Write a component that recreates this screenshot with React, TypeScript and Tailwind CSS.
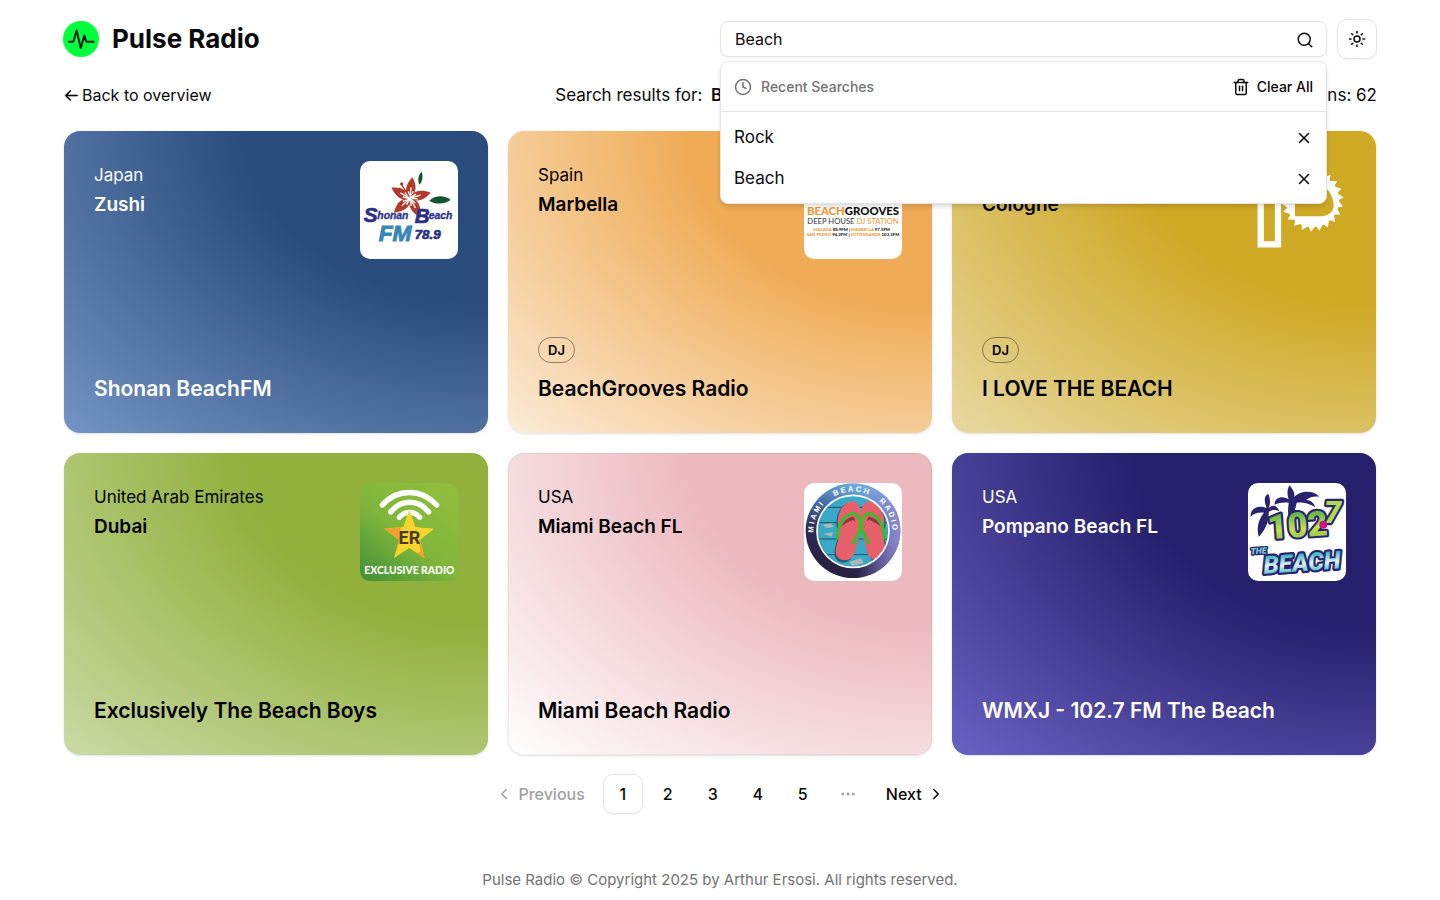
import { useState } from "react";
import type { ReactNode } from "react";
import { ChevronLeft, ChevronRight, Clock, Ellipsis, Search, Sun, Trash2, X } from "lucide-react";
import { RxArrowLeft } from "react-icons/rx";

const SANS = "'Liberation Sans', sans-serif";
const LATO = "Lato, 'Liberation Sans', sans-serif";
const ROBOTO = "Roboto, 'Liberation Sans', sans-serif";

function PulseMark() {
  return (
    <svg viewBox="0 0 36 36" className="size-9" aria-hidden="true">
      <circle cx="18" cy="18" r="18" fill="#00ff3c" />
      <path
        d="M6 20.800h3.400c.7 0 1.100-.3 1.300-1L13.600 9.400l4.200 17.600 3.500-12.600 1.600 5.400c.2.700.6 1 1.300 1h6.400"
        fill="none"
        stroke="#0a1a0a"
        strokeWidth="2"
        strokeLinecap="round"
        strokeLinejoin="round"
      />
    </svg>
  );
}

function ShonanLogo() {
  const petal = "M180 145C162 132 164 106 187 81C200 104 202 128 180 145Z";
  return (
    <svg viewBox="30 33 294 294" className="size-full bg-white">
      <g fill="#b23a2b">
        {[0, 68, 145, 222, 294].map((angle) => (
          <g key={angle} transform={`rotate(${angle} 180 145)`}>
            <path d={petal} />
            <path d="M180 146L183 112M179 144L175 124M181 144L190 124" stroke="#fff" strokeWidth="4" fill="none" />
          </g>
        ))}
      </g>
      <path d="M178 140L156 106" stroke="#b23a2b" strokeWidth="4" />
      <circle cx="155" cy="102" r="5" fill="#b23a2b" />
      <path d="M215 65C220 80 217 95 208 104C202 90 205 75 215 65Z" fill="#14532d" />
      <path d="M238 152C256 135 284 135 302 150C284 163 256 165 238 152Z" fill="#14532d" />
      <g fontFamily={SANS} fontWeight="700" fontStyle="italic" fill="#2b2f86" stroke="#2b2f86">
        <text x="41" y="217" fontSize="62" strokeWidth="2">S</text>
        <text x="82" y="208" fontSize="31" strokeWidth="1">honan</text>
        <text x="194" y="220" fontSize="62" strokeWidth="2">B</text>
        <text x="236" y="208" fontSize="31" strokeWidth="1">each</text>
        <text x="194" y="266" fontSize="40" strokeWidth="2">78.9</text>
        <text x="86" y="274" fontSize="68" fill="#3a86bb" stroke="#3a86bb" strokeWidth="3">FM</text>
      </g>
    </svg>
  );
}

function BeachGroovesLogo() {
  return (
    <svg viewBox="27 -101 294 294" className="size-full bg-white">
      <path d="M40 20H64M160 20H188M218 20H250M276 20H307" stroke="#555" strokeWidth="16" />
      <path d="M96 20H136" stroke="#ee9a3a" strokeWidth="16" />
      <g fontFamily={LATO} textAnchor="middle">
        <text x="174" y="60" fontSize="34" fontWeight="900" fill="#111">
          <tspan fill="#ee9a3a">BEACH</tspan>GROOVES
        </text>
        <text x="174" y="88" fontSize="23" fill="#333">
          DEEP HOUSE <tspan fill="#ee9a3a">DJ STATION</tspan>
        </text>
        <text x="170" y="110" fontSize="13" fontWeight="900" fill="#ee9a3a">
          MALAGA <tspan fill="#222">88.9FM |</tspan> MARBELLA <tspan fill="#222">97.5FM</tspan>
        </text>
        <text x="174" y="123" fontSize="13" fontWeight="900" fill="#ee9a3a">
          SAN PEDRO <tspan fill="#222">94.2FM |</tspan> SOTOGRANDE <tspan fill="#222">103.3FM</tspan>
        </text>
      </g>
    </svg>
  );
}

function LoveBeachLogo() {
  const teeth = Array.from({ length: 22 }, (_, i) => (i * 360) / 22);
  return (
    <svg viewBox="204 455 294 294" className="size-full">
      <path d="M242 480H294V705H242Z" fill="none" stroke="#fff" strokeWidth="19" />
      {teeth.map((angle) => (
        <path key={angle} d="M384 499L402 479L409 499Z" fill="#fff" transform={`rotate(${angle} 397 573)`} />
      ))}
      <path
        fillRule="evenodd"
        fill="#fff"
        d="M397 493a80 80 0 1 1 0 160a80 80 0 1 1 0-160ZM345 525V621H420C448 621 461 606 461 588C461 560 440 525 410 525Z"
      />
    </svg>
  );
}

function ExclusiveLogo() {
  return (
    <svg viewBox="30 25 294 294" className="size-full">
      <defs>
        <linearGradient id="er-bg" x1="0" y1="1" x2="0.8" y2="0">
          <stop offset="0" stopColor="#3f8f35" />
          <stop offset="0.5" stopColor="#7fb63b" />
          <stop offset="1" stopColor="#8fbe3d" />
        </linearGradient>
      </defs>
      <rect x="30" y="25" width="294" height="294" fill="url(#er-bg)" />
      <g fill="none" stroke="#fff" strokeWidth="16" strokeLinecap="round">
        <path d="M97 91C142 41 214 41 260 91" />
        <path d="M122 112C154 73 204 73 236 112" />
        <path d="M148 128C164 108 192 108 209 128" />
      </g>
      <path
        d="M178 105L196 157L253 162L210 195L224 250L178 220L132 250L147 195L103 162L160 157Z"
        fill="#f8d52e"
      />
      <path d="M103 162L152 158L150 200L132 250L147 195Z" fill="#f0a22b" />
      <path d="M205 192L210 195L224 250L200 235L212 232Z" fill="#f0a22b" />
      <text
        x="178"
        y="207"
        fontFamily={ROBOTO}
        fontSize="54"
        fontWeight="700"
        fill="#4c3b22"
        textAnchor="middle"
      >
        ER
      </text>
      <text x="178" y="298" fontFamily={LATO} fontSize="31" fontWeight="900" fill="#fff" textAnchor="middle">
        EXCLUSIVE RADIO
      </text>
    </svg>
  );
}

function Sandal({ x, mirrored }: { x: number; mirrored?: boolean }) {
  return (
    <g transform={mirrored ? `translate(${x} 78) scale(-1 1)` : `translate(${x} 78)`}>
      <path
        d="M20 4C-8 14 -18 52 -12 82C-5 108 -18 132 -20 150C-22 190 28 194 36 158C42 138 48 118 54 94C62 60 60 -12 20 4Z"
        fill="#1f5f70"
        transform="translate(-4 3)"
      />
      <path
        d="M20 4C-8 14 -18 52 -12 82C-5 108 -18 132 -20 150C-22 186 28 188 36 158C42 138 48 118 54 94C62 60 60 -12 20 4Z"
        fill="#e8606b"
      />
      <path d="M-6 78C8 54 26 48 34 48L48 84C42 64 38 60 32 58C18 62 6 72 -6 78Z" fill="#8f3440" />
      <path
        d="M-14 112C-14 74 6 42 32 38C52 44 58 68 52 88C48 104 38 114 34 126"
        fill="none"
        stroke="#45b72f"
        strokeWidth="10"
        strokeLinecap="round"
      />
    </g>
  );
}

function MiamiLogo() {
  return (
    <svg viewBox="27 25 294 294" className="size-full bg-white">
      <defs>
        <linearGradient id="miami-ring" x1="0.75" y1="0" x2="0.35" y2="1">
          <stop offset="0" stopColor="#7cc0ee" />
          <stop offset="0.35" stopColor="#4874ad" />
          <stop offset="0.65" stopColor="#2d2a55" />
          <stop offset="1" stopColor="#25203f" />
        </linearGradient>
        <linearGradient id="miami-side" x1="0.55" y1="0" x2="1" y2="0">
          <stop offset="0" stopColor="#8d86cf" stopOpacity="0" />
          <stop offset="1" stopColor="#8d86cf" />
        </linearGradient>
        <clipPath id="miami-disc">
          <circle cx="174" cy="170" r="106" />
        </clipPath>
        <path id="miami-arc" d="M57 184A118 118 0 1 1 291 184" />
      </defs>
      <circle cx="174" cy="168" r="142" fill="url(#miami-ring)" />
      <circle cx="174" cy="168" r="142" fill="url(#miami-side)" />
      <g clipPath="url(#miami-disc)">
        <rect x="60" y="60" width="230" height="230" fill="#38a9c6" />
        <path d="M60 98H290M60 144H290M60 193H290M60 240H290" stroke="#1c5368" strokeWidth="3" />
        <path d="M82 150l26-4 8 10-20 4zM84 178l30-6-4 14zM162 262l36-12 8 16-34 8zM232 200l30 6-10 12z" fill="#a9b9b4" />
        <Sandal x={142} />
        <Sandal x={254} mirrored />
      </g>
      <circle cx="174" cy="170" r="108" fill="none" stroke="#fff" strokeWidth="5" />
      <g fontFamily={SANS} fontSize="23" fontWeight="700" fill="#fff">
        <text>
          <textPath href="#miami-arc" startOffset="10">M I A M I</textPath>
        </text>
        <text>
          <textPath href="#miami-arc" startOffset="142">B E A C H</textPath>
        </text>
        <text>
          <textPath href="#miami-arc" startOffset="286">R A D I O</textPath>
        </text>
      </g>
    </svg>
  );
}

function WmxjLogo() {
  return (
    <svg viewBox="30 25 294 294" className="size-full bg-white">
      <defs>
        <linearGradient id="wmxj-green" x1="0" y1="0" x2="0" y2="1">
          <stop offset="0.2" stopColor="#63b545" />
          <stop offset="0.6" stopColor="#c8e04c" />
          <stop offset="1" stopColor="#6cb944" />
        </linearGradient>
        <linearGradient id="wmxj-teal" x1="0" y1="0" x2="0" y2="1">
          <stop offset="0.2" stopColor="#3bb4c4" />
          <stop offset="0.55" stopColor="#e2f6f4" />
          <stop offset="0.9" stopColor="#2aa9b8" />
        </linearGradient>
      </defs>
      <g fill="#29236f">
        <path d="M86 100C76 76 80 62 91 58C98 72 97 90 92 100C104 88 118 92 124 110C108 102 98 108 92 112C94 142 78 172 62 186C55 160 62 132 78 114C62 112 48 116 38 126C36 104 56 88 86 100Z" />
        <path d="M152 74C146 56 148 42 155 32C166 46 172 58 168 68C184 48 226 44 244 66C226 64 218 66 204 76C222 78 228 86 232 98C210 84 190 82 176 84C172 104 168 120 152 128C148 108 152 92 152 84C138 82 122 84 110 90C108 70 132 60 152 74Z" />
      </g>
      <g
        fontFamily={ROBOTO}
        fontWeight="900"
        stroke="#29236f"
        strokeWidth="13"
        strokeLinejoin="round"
        style={{ paintOrder: "stroke" }}
      >
        <text x="88" y="188" fontSize="104" fill="url(#wmxj-green)" transform="rotate(-4 170 150)">
          102
        </text>
        <text x="258" y="146" fontSize="92" fontStyle="italic" fill="#b2d84b">
          7
        </text>
        <circle cx="256" cy="150" r="12" fill="#c5178a" stroke="none" />
        <text x="76" y="290" fontSize="74" fontStyle="italic" fill="url(#wmxj-teal)" transform="rotate(-4 180 270)">
          BEACH
        </text>
        <text x="38" y="238" fontSize="26" strokeWidth="8" fontStyle="italic" fill="#7fd3dc" transform="rotate(-3 60 235)">
          THE
        </text>
      </g>
    </svg>
  );
}

type Station = {
  country: string;
  city: string;
  name: string;
  tag?: string;
  surface: string;
  logo: ReactNode;
};

const stations: Station[] = [
  {
    country: "Japan",
    city: "Zushi",
    name: "Shonan BeachFM",
    surface: "border-transparent text-white bg-[radial-gradient(ellipse_at_top_right,#294c7c_40%,#7594c6)]",
    logo: <ShonanLogo />,
  },
  {
    country: "Spain",
    city: "Marbella",
    name: "BeachGrooves Radio",
    tag: "DJ",
    surface: "border-transparent text-black bg-[radial-gradient(ellipse_at_top_right,#efab55_40%,#fbecd9)]",
    logo: <BeachGroovesLogo />,
  },
  {
    country: "Germany",
    city: "Cologne",
    name: "I LOVE THE BEACH",
    tag: "DJ",
    surface: "border-transparent text-black bg-[radial-gradient(ellipse_at_top_right,#cfa824_40%,#e7d9a2)]",
    logo: <LoveBeachLogo />,
  },
  {
    country: "United Arab Emirates",
    city: "Dubai",
    name: "Exclusively The Beach Boys",
    surface: "border-transparent text-black bg-[radial-gradient(ellipse_at_top_right,#91b03c_40%,#cbdaa6)]",
    logo: <ExclusiveLogo />,
  },
  {
    country: "USA",
    city: "Miami Beach FL",
    name: "Miami Beach Radio",
    surface: "border-black/5 text-black bg-[radial-gradient(ellipse_at_top_right,#ecb9bf_40%,#ffffff)]",
    logo: <MiamiLogo />,
  },
  {
    country: "USA",
    city: "Pompano Beach FL",
    name: "WMXJ - 102.7 FM The Beach",
    surface: "border-transparent text-white bg-[radial-gradient(ellipse_at_top_right,#251f6c_40%,#6a62c3)]",
    logo: <WmxjLogo />,
  },
];

function StationCard({ station }: { station: Station }) {
  return (
    <article
      className={`flex min-h-[302px] flex-col justify-between rounded-2xl border bg-origin-border p-[29px] shadow-sm ${station.surface}`}
    >
      <div className="flex items-start justify-between gap-4">
        <div className="text-[17px] leading-[29px]">
          <p>{station.country}</p>
          <p className="text-[19px] leading-[29px] font-semibold">{station.city}</p>
        </div>
        <div className="size-[98px] shrink-0 overflow-hidden rounded-[10px]">{station.logo}</div>
      </div>
      <div className="flex flex-col items-start gap-3">
        {station.tag && (
          <span className="rounded-full border border-black/40 px-[9px] text-[13px] leading-6 font-semibold">
            {station.tag}
          </span>
        )}
        <h2 className="text-[21px] leading-7 font-semibold">{station.name}</h2>
      </div>
    </article>
  );
}

function SearchBox() {
  const [query, setQuery] = useState("Beach");
  return (
    <form className="relative flex-1" onSubmit={(event) => event.preventDefault()}>
      <label htmlFor="station-search" className="sr-only">
        Search stations
      </label>
      <input
        id="station-search"
        value={query}
        onChange={(event) => setQuery(event.target.value)}
        className="block h-9 w-full rounded-lg border border-neutral-200 bg-white pr-10 pl-3.5 text-base shadow-xs outline-none"
      />
      <button type="submit" aria-label="Search" className="absolute top-[10px] right-[13px]">
        <Search size={18} />
      </button>
      <div className="absolute inset-x-0 top-full z-10 mt-1 rounded-lg border border-neutral-200 bg-white shadow-md">
        <div className="flex h-[50px] items-center justify-between border-b border-neutral-200 px-[13px] text-sm font-medium">
          <span className="flex items-center gap-[9px] text-neutral-500">
            <Clock size={18} />
            Recent Searches
          </span>
          <button type="button" className="flex items-center gap-[7px]">
            <Trash2 size={18} />
            Clear All
          </button>
        </div>
        <ul className="pt-[5px] pb-1 text-[17px]">
          {["Rock", "Beach"].map((term) => (
            <li key={term} className="flex h-[41px] items-center justify-between px-[13px]">
              <button type="button" onClick={() => setQuery(term)}>
                {term}
              </button>
              <button type="button" aria-label={`Remove ${term}`}>
                <X size={18} />
              </button>
            </li>
          ))}
        </ul>
      </div>
    </form>
  );
}

export default function App() {
  return (
    <div className="min-h-screen bg-white px-[63px] pt-[19px] pb-2 font-[Inter,sans-serif] text-neutral-950">
      <header className="grid grid-cols-2 items-center">
        <a href="#home" className="flex items-center gap-[13px]">
          <PulseMark />
          <span className="text-[26px] leading-10 font-bold">Pulse Radio</span>
        </a>
        <div className="flex items-center gap-2.5">
          <SearchBox />
          <button
            type="button"
            aria-label="Switch theme"
            className="flex size-10 items-center justify-center rounded-[10px] border border-neutral-200 shadow-xs"
          >
            <Sun size={18} />
          </button>
        </div>
      </header>

      <main>
        <div className="mt-[22px] mb-[22px] flex items-center justify-between text-[17px] leading-7">
          <a href="#overview" className="flex items-center gap-0.5 text-base">
            <RxArrowLeft size={17} className="stroke-current stroke-[0.5]" />
            Back to overview
          </a>
          <p>
            Search results for: <strong className="ml-1 font-semibold">Beach</strong>
          </p>
          <p>Total number of radio stations: 62</p>
        </div>

        <section className="grid grid-cols-3 gap-5 px-px" aria-label="Stations">
          {stations.map((station) => (
            <StationCard key={station.name} station={station} />
          ))}
        </section>

        <nav className="mt-[19px] flex items-center justify-center gap-[5px] text-base font-medium" aria-label="Pagination">
          <button type="button" disabled className="flex h-10 items-center gap-[5px] px-[13px] text-neutral-400">
            <ChevronLeft size={18} />
            Previous
          </button>
          <button
            type="button"
            aria-current="page"
            className="size-10 rounded-[10px] border border-neutral-200 shadow-xs"
          >
            1
          </button>
          {[2, 3, 4, 5].map((page) => (
            <button key={page} type="button" className="size-10">
              {page}
            </button>
          ))}
          <span className="flex size-10 items-center justify-center text-neutral-400">
            <Ellipsis size={18} />
          </span>
          <button type="button" className="flex h-10 items-center gap-[5px] px-[13px]">
            Next
            <ChevronRight size={18} />
          </button>
        </nav>
      </main>

      <footer className="mt-[54px] text-center text-[15px] leading-6 text-neutral-500">
        Pulse Radio © Copyright 2025 by Arthur Ersosi. All rights reserved.
      </footer>
    </div>
  );
}
